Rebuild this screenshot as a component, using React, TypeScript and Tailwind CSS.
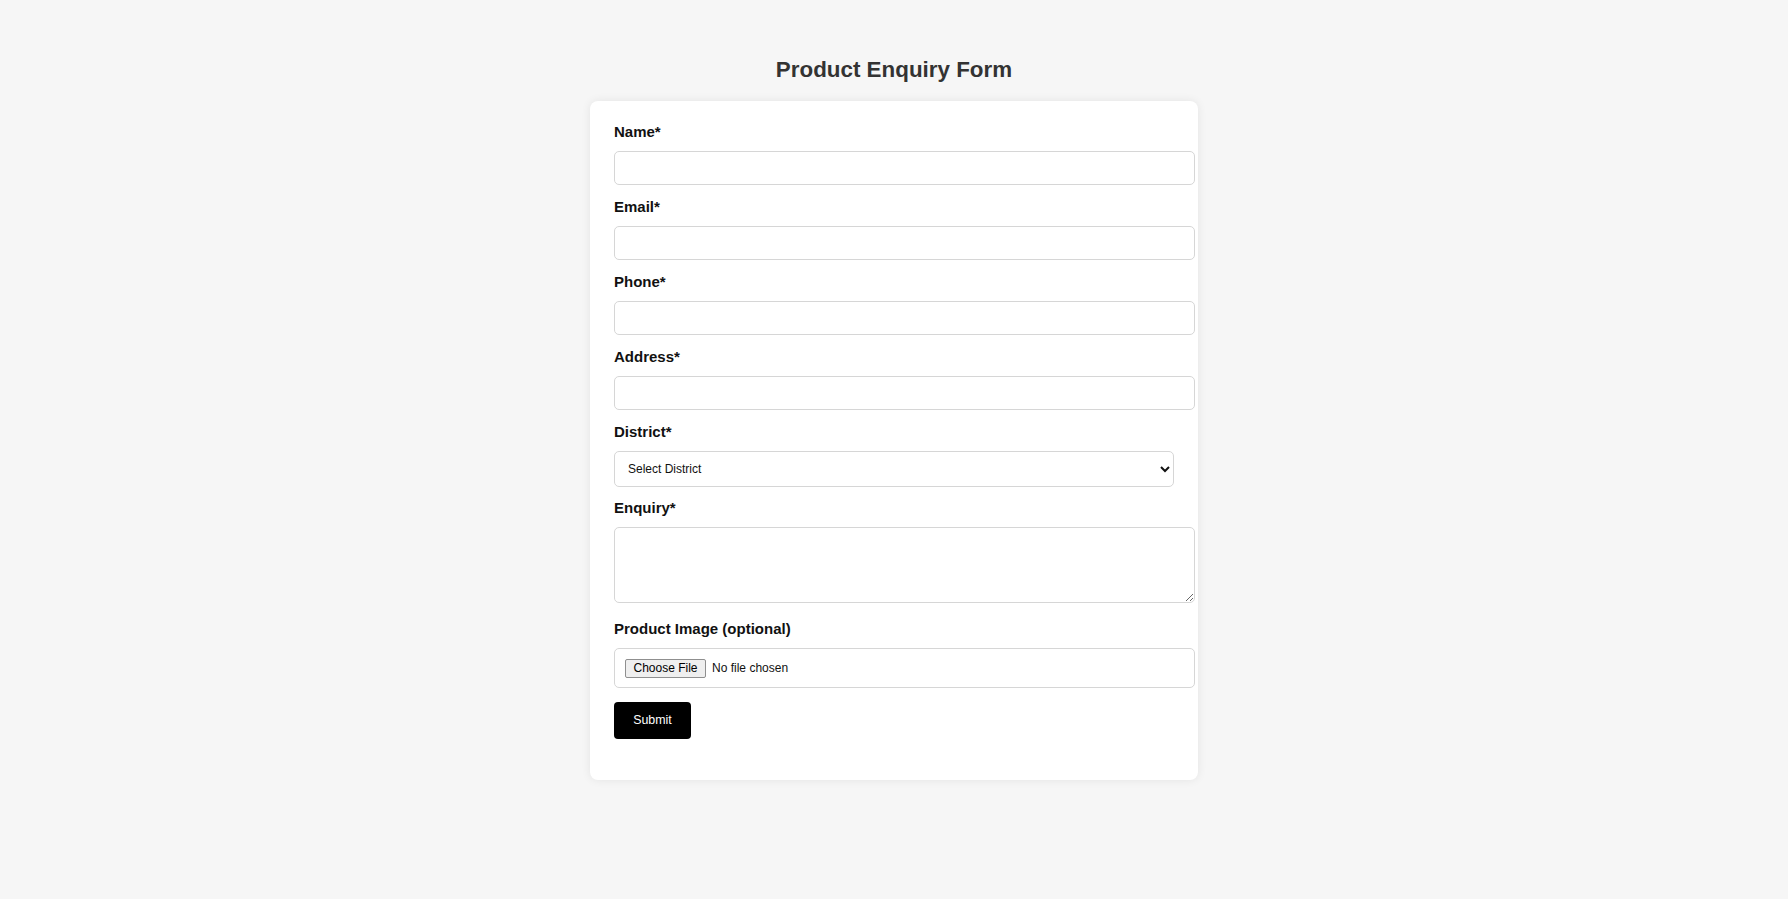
import React from "react";

const font = { fontFamily: '"Liberation Sans", Arial, sans-serif' };

function Label({ children }: { children: React.ReactNode }) {
  return (
    <label className="block text-[15px] leading-[18px] font-bold text-[#111] mb-[10px]">
      {children}
    </label>
  );
}

const inputCls =
  "block w-[581px] h-[34px] bg-white border border-[#d6d6d6] rounded-[5px] outline-none";

export default function App() {
  return (
    <div
      className="min-h-[899px] w-full bg-[#f6f6f6] flex flex-col items-center pt-[57px]"
      style={font}
    >
      <h2 className="text-[22.4px] leading-[26px] font-bold text-[#333] mb-[18px]">
        Product Enquiry Form
      </h2>
      <div className="w-[608px] bg-white rounded-[8px] shadow-[0_0_10px_rgba(0,0,0,0.08)] px-6 pt-[22px] pb-[41px]">
        <div className="mb-[13px]">
          <Label>Name*</Label>
          <input type="text" className={inputCls} />
        </div>
        <div className="mb-[13px]">
          <Label>Email*</Label>
          <input type="email" className={inputCls} />
        </div>
        <div className="mb-[13px]">
          <Label>Phone*</Label>
          <input type="tel" className={inputCls} />
        </div>
        <div className="mb-[13px]">
          <Label>Address*</Label>
          <input type="text" className={inputCls} />
        </div>
        <div className="mb-[12px]">
          <Label>District*</Label>
          <select
            className="block w-[560px] h-[36px] bg-white border border-[#d6d6d6] rounded-[5px] pl-[9px] pr-[8px] text-[12px] text-[#111] outline-none"
            defaultValue=""
          >
            <option value="">Select District</option>
            <option>District 1</option>
          </select>
        </div>
        <div className="mb-[17px]">
          <Label>Enquiry*</Label>
          <textarea className="block w-[581px] h-[76px] bg-white border border-[#d6d6d6] rounded-[5px] outline-none resize-y" />
        </div>
        <div className="mb-[14px]">
          <Label>Product Image (optional)</Label>
          <div className="w-[581px] h-[40px] bg-white border border-[#d6d6d6] rounded-[5px] flex items-center pl-[10px] text-[12px] text-[#111]">
            <span className="inline-flex items-center justify-center h-[19px] px-[7.5px] bg-[#efefef] border border-[#8f8f8f] rounded-[2px] text-[12px] text-black">
              Choose File
            </span>
            <span className="ml-[6px]">No file chosen</span>
          </div>
        </div>
        <button className="w-[77px] h-[37px] bg-black text-white text-[12.4px] rounded-[4px] flex items-center justify-center">
          Submit
        </button>
      </div>
    </div>
  );
}
